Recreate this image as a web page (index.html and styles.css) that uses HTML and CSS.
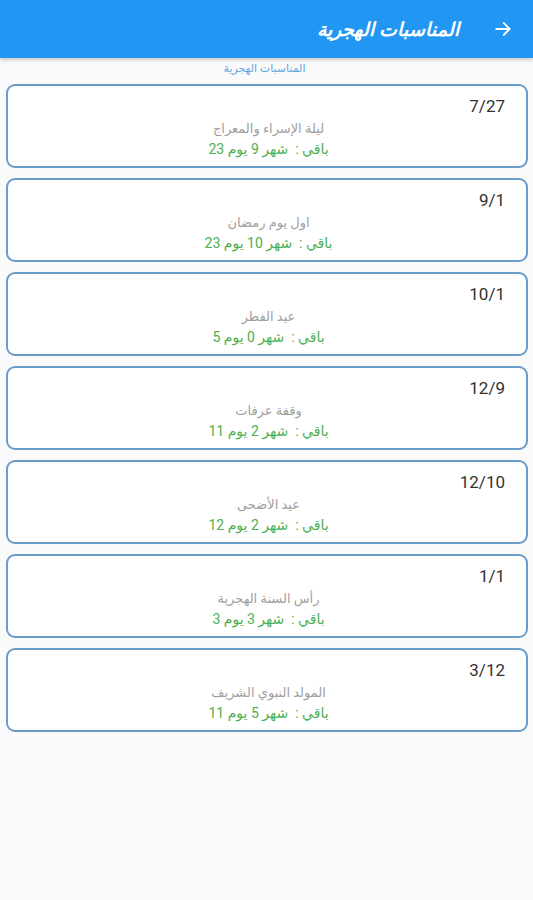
FILE: index.html
```html
<!DOCTYPE html>
<html lang="ar" dir="rtl">
<head>
  <meta charset="UTF-8">
  <title>المناسبات الهجرية</title>
  <link rel="stylesheet" href="styles.css">
</head>
<body>
  <div class="appbar">
    <svg class="back" width="20" height="20" viewBox="0 0 24 24">
      <path d="M4 12h15M13 5l7 7-7 7" fill="none" stroke="#fff" stroke-width="2.4" stroke-linecap="round" stroke-linejoin="round"/>
    </svg>
    <span class="title">المناسبات الهجرية</span>
  </div>

  <div class="subtitle">المناسبات الهجرية</div>

  <div class="list">
    <div class="card">
      <div class="date">7/27</div>
      <div class="name">ليلة الإسراء والمعراج</div>
      <div class="left">باقي :&nbsp; شهر 9 يوم 23</div>
    </div>
    <div class="card">
      <div class="date">9/1</div>
      <div class="name">اول يوم رمضان</div>
      <div class="left">باقي :&nbsp; شهر 10 يوم 23</div>
    </div>
    <div class="card">
      <div class="date">10/1</div>
      <div class="name">عيد الفطر</div>
      <div class="left">باقي :&nbsp; شهر 0 يوم 5</div>
    </div>
    <div class="card">
      <div class="date">12/9</div>
      <div class="name">وقفة عرفات</div>
      <div class="left">باقي :&nbsp; شهر 2 يوم 11</div>
    </div>
    <div class="card">
      <div class="date">12/10</div>
      <div class="name">عيد الأضحى</div>
      <div class="left">باقي :&nbsp; شهر 2 يوم 12</div>
    </div>
    <div class="card">
      <div class="date">1/1</div>
      <div class="name">رأس السنة الهجرية</div>
      <div class="left">باقي :&nbsp; شهر 3 يوم 3</div>
    </div>
    <div class="card">
      <div class="date">3/12</div>
      <div class="name">المولد النبوي الشريف</div>
      <div class="left">باقي :&nbsp; شهر 5 يوم 11</div>
    </div>
  </div>
</body>
</html>
```

FILE: styles.css
```css
body {
  margin: 0;
  background-color: #fafafa;
  font-family: Roboto, "DejaVu Sans", sans-serif;
  height: 900px;
}
.appbar {
  height: 58px;
  background-color: #2196f3;
  display: flex;
  align-items: center;
  padding: 0 20px;
  gap: 34px;
  box-shadow: 0 2px 4px rgba(0,0,0,0.2);
}
.back {
  flex-shrink: 0;
}
.title {
  color: #fff;
  font-size: 19px;
  font-weight: bold;
  font-style: italic;
}
.subtitle {
  text-align: center;
  color: #5ea6de;
  font-size: 11px;
  margin-top: 3px;
  height: 23px;
  line-height: 16px;
  padding-right: 4px;
}
.list {
  display: flex;
  flex-direction: column;
  gap: 10px;
  padding: 0 5px 0 6px;
}
.card {
  height: 80px;
  border: 2px solid #6a9ccb;
  border-radius: 9px;
  background-color: #fff;
  padding: 0 21px 0 24px;
  display: flex;
  flex-direction: column;
}
.date {
  color: #333;
  font-size: 17px;
  margin-top: 10px;
  line-height: 20px;
  direction: ltr;
  text-align: right;
}
.name {
  color: #a0a0a0;
  font-size: 13px;
  text-align: center;
  line-height: 18px;
  margin-top: 4px;
}
.left {
  color: #4caf50;
  font-size: 14px;
  text-align: center;
  line-height: 20px;
  margin-top: 1px;
}
```
